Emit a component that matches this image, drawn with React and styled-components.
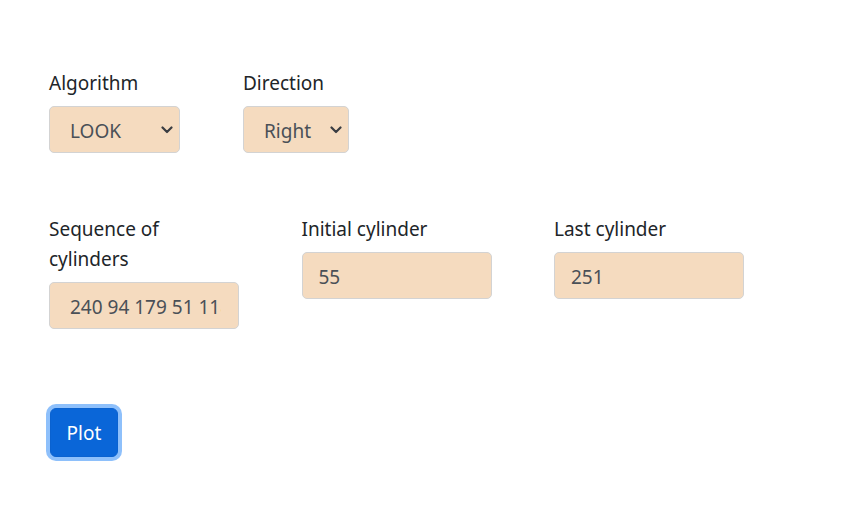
import React from "react";
import styled, { createGlobalStyle } from "styled-components";

const GlobalStyle = createGlobalStyle`
  body {
    margin: 0;
    background: #fff;
    font-family: "Noto Sans", "Open Sans", sans-serif;
    color: #212529;
  }
`;

const Page = styled.div`
  padding: 68px 49px 40px;
`;

const Row = styled.div`
  display: flex;
  align-items: flex-start;
  gap: ${(p) => p.gap || 62}px;
  margin-bottom: ${(p) => p.after || 0}px;
`;

const Field = styled.div`
  display: flex;
  flex-direction: column;
  width: ${(p) => p.width}px;
`;

const Label = styled.label`
  font-size: 19px;
  line-height: 30px;
  margin-bottom: 8px;
`;

const chevron =
  "url(\"data:image/svg+xml,%3csvg xmlns='http://www.w3.org/2000/svg' viewBox='0 0 12 8'%3e%3cpath fill='none' stroke='%233a3d42' stroke-width='2.2' stroke-linecap='round' stroke-linejoin='round' d='M1.5 1.5l4.5 4.5 4.5-4.5'/%3e%3c/svg%3e\")";

const Select = styled.select`
  appearance: none;
  box-sizing: border-box;
  width: 100%;
  height: 47px;
  padding: 3px 24px 0 20px;
  font-family: inherit;
  font-size: 19px;
  color: #4a5057;
  background-color: #f5dbbf;
  background-image: ${chevron};
  background-repeat: no-repeat;
  background-position: right 6px center;
  background-size: 12px 8px;
  border: 1px solid #d3d3d3;
  border-radius: 5px;
  outline: none;
`;

const Input = styled.input`
  box-sizing: border-box;
  width: 100%;
  height: 47px;
  padding: 2px 17px 0 ${(p) => p.indent || 16}px;
  font-family: inherit;
  font-size: 19px;
  color: #4a5057;
  background: #f5dbbf;
  border: 1px solid #d3d3d3;
  border-radius: 5px;
  outline: none;
`;

const Button = styled.button`
  margin-left: 1px;
  width: 68px;
  height: 49px;
  font-family: inherit;
  font-size: 19px;
  color: #fff;
  background: #0a66d8;
  border: 1px solid #0a62d0;
  border-radius: 6px;
  box-shadow: 0 0 0 4px #8ec0fb;
  cursor: pointer;
`;

export default function App() {
  return (
    <>
      <GlobalStyle />
      <Page>
        <Row gap={63} after={61}>
          <Field width={131}>
            <Label>Algorithm</Label>
            <Select defaultValue="LOOK">
              <option>FCFS</option>
              <option>SSTF</option>
              <option>SCAN</option>
              <option>C-SCAN</option>
              <option>LOOK</option>
              <option>C-LOOK</option>
            </Select>
          </Field>
          <Field width={106}>
            <Label>Direction</Label>
            <Select defaultValue="Right">
              <option>Left</option>
              <option>Right</option>
            </Select>
          </Field>
        </Row>
        <Row gap={62.5} after={79}>
          <Field width={190}>
            <Label>Sequence of cylinders</Label>
            <Input indent={20} defaultValue="240 94 179 51 118 15 137 29 75" />
          </Field>
          <Field width={190}>
            <Label>Initial cylinder</Label>
            <Input defaultValue="55" />
          </Field>
          <Field width={190}>
            <Label>Last cylinder</Label>
            <Input defaultValue="251" />
          </Field>
        </Row>
        <Button>Plot</Button>
      </Page>
    </>
  );
}
